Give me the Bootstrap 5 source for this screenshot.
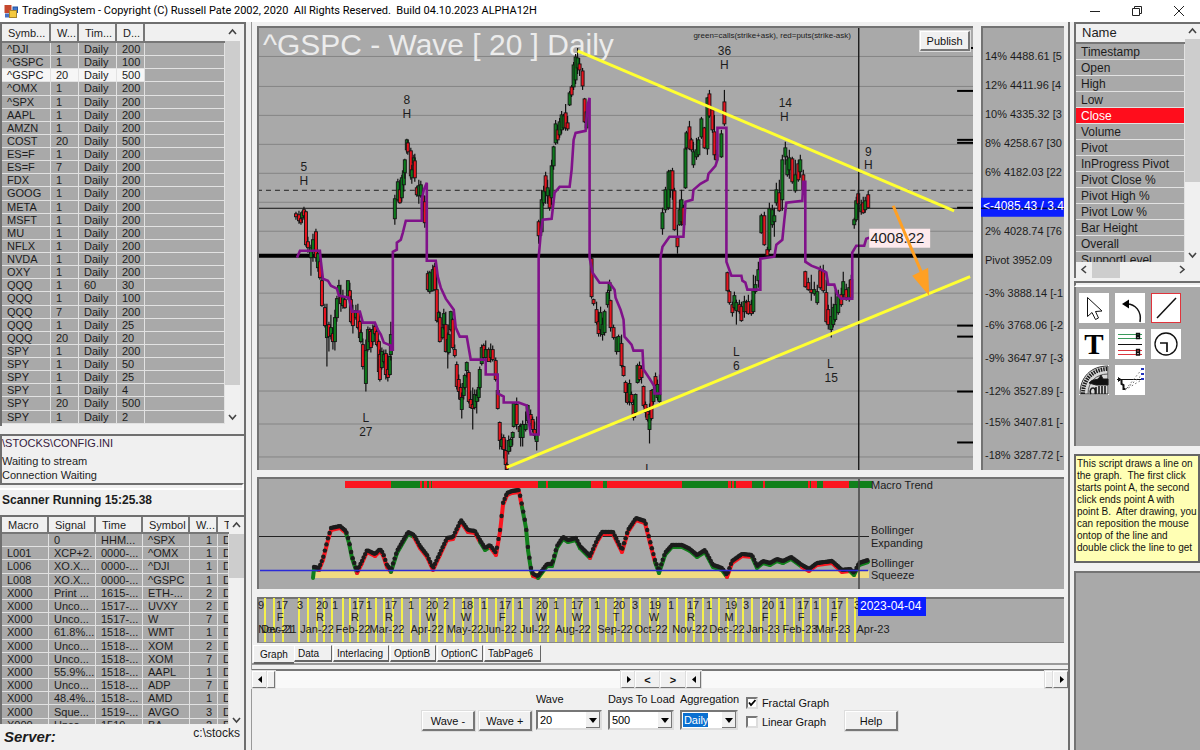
<!DOCTYPE html>
<html lang="en">
<head>
<meta charset="utf-8">
<meta name="viewport" content="width=device-width, initial-scale=1">
<title>TradingSystem</title>
<link href="https://cdn.jsdelivr.net/npm/bootstrap@5.3.0/dist/css/bootstrap.min.css" rel="stylesheet">
<style>
:root{--face:#f0f0f0;--pane:#a9a9a9;--edge:#6f6f6f}
body{font-family:"Liberation Sans",sans-serif;font-size:11px;line-height:14px;color:#1c1c1c;background:var(--face);min-height:100vh}
.titlebar{height:22px;background:#fff;font-family:Roboto,sans-serif;font-size:11px;color:#000}
.titlebar button{width:42px;height:22px;background:none;border:0;padding:0}
.left-side{width:246px;border-right:2px solid var(--edge)}
.right-side{width:132px;border-left:2px solid var(--edge)}
.sunken{border:2px solid var(--edge);border-right-color:#fff;border-bottom-color:#fff}
.pane{background:var(--pane);border-top:2px solid #747474;border-left:2px solid #747474}
.grid-list{width:100%;table-layout:fixed;border-collapse:separate;border-spacing:0;font-size:11px;line-height:12px;background:var(--pane)}
.grid-list th{height:17px;background:var(--face);font-weight:400;border-right:2px solid #777;border-bottom:2px solid #777;padding:0 0 0 6px;white-space:nowrap;overflow:hidden}
.grid-list th:last-child{border-right:0}
.grid-list td{border-right:1px solid #e2e2e2;border-bottom:1px solid #e2e2e2;padding:0 0 0 5px;white-space:nowrap;overflow:hidden}
.grid-list td:first-child{padding-left:5px}
.grid-list tr.picked td:not(:last-child){background:#f6f6f6}
.watch-box{height:404px}
.watch-box th{height:19px}
.watch-box table{height:400px}
.scan-box{height:209px}
.scan-box table{height:215px}
.scan-box td:nth-child(5){text-align:right;padding-right:5px}
.name-box{height:256px}
.name-box .grid-list{font-size:12px;line-height:14px}
.name-box .grid-list th{height:20px;font-size:13px}
.name-box .grid-list td{height:16px}
.name-box tr.picked td{background:#ff0d1c!important;color:#fff}
.vbar{width:15px;background:var(--face)}
.vbar svg,.hbar svg{display:block}
.thumb{background:#cdcdcd}
.hbar{height:16px}
.tool{width:30px;height:30px;border:0;padding:0;background:#fff}
.tool.chosen{outline:1px solid #e0343c;outline-offset:-1px}
.tool svg{display:block}
.tools{display:grid;grid-template-columns:repeat(3,30px);gap:6px;padding:6px 3px;height:159px;align-content:start}
.hint{height:109px;background:#ffffb4;border:2px solid #666;font-size:10px;line-height:12px;padding:2px 0 0 1px;color:#111;overflow:hidden}
.main-side{background:var(--face);border-left:1px solid #999;margin-left:5px;min-width:0}
.charts{padding:4px 4px 0 5px}
.price-row{display:grid;grid-template-columns:717fr 8fr 83fr;margin-bottom:7px}
.charts svg{display:block;width:100%;height:auto;background:var(--pane)}
.publish{top:5px;right:3px;width:50px;height:20px}
.raised{font-size:11px;line-height:14px;background:var(--face);border:1px solid #fff;border-right:2px solid #777;border-bottom:2px solid #777;padding:0;color:#111;box-shadow:0 0 0 1px #ddd}
.tabs{padding:2px 0 0 1px;height:22px;border-bottom:2px solid #9a9a9a}
.tabs button{height:17px;border:1px solid #fff;border-right:1px solid #666;border-bottom:2px solid #666;background:var(--face);font-size:10px;line-height:13px;padding:0 0 0 3px;text-align:left;margin-right:1px;color:#111;white-space:nowrap}
.tabs button.on{height:19px;padding-left:6px;border-right:0;margin-right:0}
.strip{height:19px;border-top:2px solid #777;background:#f9f9f9}
.strip .raised{height:17px;border-width:1px}
.controls{color:#111;white-space:nowrap}
.controls .raised{width:53px;height:20px;margin-top:19px}
.combo{width:66px;margin-right:6px}
.combo.agg{width:58px;margin-right:8px}
.combo label{margin-bottom:4px}
.combo select{appearance:none;height:20px;border:2px solid #777;border-right-color:#ddd;border-bottom-color:#ddd;background:#fff;font:inherit;padding:0 0 0 2px;width:100%;border-radius:0;display:block}
.combo.agg select{color:#fff;background:linear-gradient(#0a6fd0,#0a6fd0) 1px 1px/25px 14px no-repeat #fff}
.combo::after{content:"";position:absolute;right:2px;bottom:2px;width:14px;height:16px;background:var(--face);border-right:1px solid #777;border-bottom:1px solid #777}
.combo::before{content:"";position:absolute;z-index:1;right:5px;bottom:7px;border:4px solid transparent;border-top:5px solid #000;border-bottom:0}
.check{padding-top:4px}
.check label{margin-bottom:5px}
.check input{appearance:none;width:12px;height:12px;margin:0;background:#fff;border:2px solid #777;border-right-color:#ddd;border-bottom-color:#ddd;display:block}
.check input:checked{background:url("data:image/svg+xml,%3Csvg xmlns='http://www.w3.org/2000/svg' viewBox='0 0 8 8'%3E%3Cpath d='M1 3.500l2 2.500L7.500 1' fill='none' stroke='black' stroke-width='1.800'/%3E%3C/svg%3E") #fff}
.scan-title{font-size:12px;padding:3px 0 8px 2px}
.server{font-size:15px;line-height:18px;font-weight:700;font-style:italic}
</style>
</head>
<body class="d-flex flex-column">
<header class="titlebar d-flex align-items-center">
  <svg width="14" height="14" viewBox="0 0 14 14" class="ms-1 me-1" aria-hidden="true"><rect x=".5" y="1" width="7" height="8" fill="#c6482e"/><rect x="9" y="3" width="4.500" height="5.500" fill="#3f78cf" stroke="#2553a0"/><rect x="1" y="9.500" width="5" height="4" fill="#4770c2"/><rect x="5.500" y="6.500" width="7" height="7" fill="#f5c93e" stroke="#a8862a"/></svg>
  <span class="flex-grow-1 text-nowrap">TradingSystem - Copyright (C) Russell Pate 2002, 2020&nbsp; All Rights Reserved.&nbsp; Build 04.10.2023 ALPHA12H</span>
  <button aria-label="Minimize"><svg width="12" height="12"><path d="M1 6.500h10" stroke="#222"/></svg></button>
  <button aria-label="Restore"><svg width="12" height="12" fill="none" stroke="#222"><path d="M1.500 3.500h7v7h-7zM3.500 3.500v-2h7v7h-2"/></svg></button>
  <button aria-label="Close"><svg width="12" height="12"><path d="M1 1l10 10M11 1L1 11" stroke="#222"/></svg></button>
</header>
<main class="d-flex flex-grow-1">
  <aside class="left-side flex-shrink-0 d-flex flex-column">
    <div class="sunken border-bottom-0 border-end-0 d-flex watch-box overflow-hidden">
      <div class="flex-grow-1"><table class="grid-list" id="watch"><colgroup><col style="width:49px"><col style="width:28px"><col style="width:38px"><col style="width:28px"><col></colgroup><thead><tr><th>Symb...</th><th>W...</th><th>Tim...</th><th>D...</th><th></th></tr></thead><tbody></tbody></table></div>
      <div class="vbar d-flex flex-column me-1">
        <svg width="15" height="17"><path d="M4 10l3.500-4L11 10" fill="none" stroke="#444" stroke-width="1.600"/></svg>
        <div class="thumb flex-grow-1"></div><div style="height:24px"></div>
        <svg width="15" height="17"><path d="M4 6l3.500 4L11 6" fill="none" stroke="#444" stroke-width="1.600"/></svg>
      </div>
    </div>
    <div class="sunken border-end-0 border-bottom-0 mt-2 px-0" style="height:49px">
      <div style="color:#35203c">\STOCKS\CONFIG.INI</div>
      <div class="pt-1">Waiting to stream</div><div>Connection Waiting</div>
    </div>
    <div class="sunken border-start-0" style="height:7px"></div>
    <div class="fw-bold scan-title text-nowrap">Scanner Running 15:25.38</div>
    <div class="sunken border-bottom-0 border-end-0 d-flex scan-box overflow-hidden">
      <div class="flex-grow-1"><table class="grid-list" id="scan"><colgroup><col style="width:47px"><col style="width:47px"><col style="width:47px"><col style="width:47px"><col style="width:28px"><col></colgroup><thead><tr><th>Macro</th><th>Signal</th><th>Time</th><th>Symbol</th><th>W...</th><th>T</th></tr></thead><tbody></tbody></table></div>
      <div class="vbar d-flex flex-column">
        <svg width="15" height="17"><path d="M4 10l3.500-4L11 10" fill="none" stroke="#444" stroke-width="1.600"/></svg>
        <div class="thumb" style="height:44px"></div><div class="flex-grow-1"></div>
        <svg width="15" height="10"><path d="M4 4l3.500 4L11 4" fill="none" stroke="#444" stroke-width="1.600"/></svg>
      </div>
    </div>
    <div class="d-flex justify-content-between align-items-start px-1"><span class="server pt-1">Server:</span><span style="font-size:12px;padding-top:2px">c:\stocks</span></div>
  </aside>

  <section class="main-side flex-grow-1 d-flex flex-column">
    <div class="charts">
      <div class="price-row">
        <div class="position-relative">
          <svg id="price" viewBox="257 26 717 445" font-size="12" fill="#1c1c1c"></svg>
          <button class="raised publish position-absolute">Publish</button>
        </div>
        <span></span>
        <svg id="axis" viewBox="981 26 83 445" font-size="11" fill="#1c1c1c"></svg>
      </div>
      <svg id="macro" class="mb-2" viewBox="257 478 807 112" font-size="11" fill="#1c1c1c"></svg>
      <svg id="dates" viewBox="257 598 807 46" font-size="11" fill="#1c1c1c"></svg>
    </div>
    <nav class="tabs d-flex align-items-start">
      <button class="on" style="width:41px">Graph</button><button style="width:38px">Data</button><button style="width:56px">Interlacing</button><button style="width:46px">OptionB</button><button style="width:46px">OptionC</button><button style="width:57px">TabPage6</button>
    </nav>
    <div class="mt-1"></div>
    <div class="strip d-flex">
      <div class="d-flex" style="flex:383 1 0"><button class="raised" style="width:15px" aria-label="Scroll left"><svg width="10" height="9" class="d-block mx-auto"><path d="M7 1v7L3 4.500z"/></svg></button><span class="raised" style="width:8px"></span><span class="flex-grow-1"></span><button class="raised" style="width:14px" aria-label="Scroll right"><svg width="10" height="9" class="d-block mx-auto"><path d="M4 1v7l4-3.500z"/></svg></button></div>
      <button class="raised fw-bold" style="width:25px">&lt;</button><button class="raised fw-bold" style="width:26px">&gt;</button>
      <div class="d-flex" style="flex:382 1 0"><button class="raised" style="width:15px" aria-label="Scroll left"><svg width="10" height="9" class="d-block mx-auto"><path d="M7 1v7L3 4.500z"/></svg></button><span class="flex-grow-1"></span><span class="raised" style="width:8px"></span><button class="raised" style="width:15px" aria-label="Scroll right"><svg width="10" height="9" class="d-block mx-auto"><path d="M4 1v7l4-3.500z"/></svg></button></div>
    </div>
    <form class="controls d-flex justify-content-center align-items-start pt-1">
      <button type="button" class="raised me-1">Wave -</button>
      <button type="button" class="raised me-1">Wave +</button>
      <div class="combo position-relative"><label for="wave" class="d-block">Wave</label><select id="wave"><option>20</option></select></div>
      <div class="combo position-relative"><label for="days" class="d-block">Days To Load</label><select id="days"><option>500</option></select></div>
      <div class="combo agg position-relative"><label for="agg" class="d-block">Aggregation</label><select id="agg"><option>Daily</option></select></div>
      <div class="check"><label class="d-flex align-items-center gap-1"><input type="checkbox" checked>Fractal Graph</label><label class="d-flex align-items-center gap-1"><input type="checkbox">Linear Graph</label></div>
      <button type="button" class="raised ms-3">Help</button>
    </form>
  </section>

  <aside class="right-side flex-shrink-0 d-flex flex-column ps-1">
    <div class="sunken border-end-0 border-bottom-0 name-box d-flex flex-column overflow-hidden">
      <div class="d-flex flex-grow-1 overflow-hidden" style="height:240px">
        <div class="flex-grow-1"><table class="grid-list" id="names"><thead><tr><th>Name</th></tr></thead><tbody></tbody></table></div>
        <div class="vbar d-flex flex-column"><svg width="15" height="15"><path d="M4 9l3.500-4L11 9" fill="none" stroke="#444" stroke-width="1.600"/></svg><div class="thumb" style="height:143px"></div><div class="flex-grow-1"></div><svg width="15" height="15"><path d="M4 6l3.500 4L11 6" fill="none" stroke="#444" stroke-width="1.600"/></svg></div>
      </div>
      <div class="hbar d-flex flex-shrink-0"><svg width="16" height="15"><path d="M10 4L6 7.500l4 3.500" fill="none" stroke="#444" stroke-width="1.600"/></svg><div class="thumb" style="width:28px"></div><div class="flex-grow-1"></div><svg width="32" height="15"><path d="M12 4l4 3.500-4 3.500" fill="none" stroke="#444" stroke-width="1.600"/></svg></div>
    </div>
    <div class="sunken border-end-0" style="height:6px;margin-top:3px"></div>
    <div class="pane tools border-top-0">
      <button class="tool" aria-label="Pointer"><svg width="30" height="30" fill="#fff" stroke="#111"><path d="M8.500 4.500v19l4.500-4 3.500 7 3-1.500-3-6.500 6.500-.5z"/></svg></button>
      <button class="tool" aria-label="Undo"><svg width="30" height="30"><path d="M12 11c8 0 15 7 13 18" fill="none" stroke="#111" stroke-width="1.500"/><path d="M7 11l7-4.500v9z"/></svg></button>
      <button class="tool chosen" aria-label="Line"><svg width="30" height="30"><path d="M6 25L25 5" stroke="#111" stroke-width="1.500"/></svg></button>
      <button class="tool" aria-label="Text"><svg width="30" height="30"><text x="15" y="25" text-anchor="middle" font-family="Liberation Serif,serif" font-size="29" font-weight="700">T</text></svg></button>
      <button class="tool" aria-label="Levels"><svg width="30" height="30" fill="none"><path d="M3 5.500h24M3 9.500h24" stroke="#3a9a5c"/><path d="M3 15.500h24" stroke="#111"/><path d="M3 21.500h24M3 25.500h24" stroke="#d9363e"/><path d="M21.500 4.500h3v2h-3zM21.500 7.500h3v2h-3zM21.500 20.500h3v2.500h-3zM21.500 23.500h3v2.500h-3z" stroke="#111" stroke-width="1.300"/></svg></button>
      <button class="tool" aria-label="Clock"><svg width="30" height="30" fill="none" stroke="#111"><circle cx="15" cy="15" r="11" stroke-width="1.300"/><path d="M9 14h7v9" stroke-width="1.700"/></svg></button>
      <button class="tool" aria-label="Fibonacci arc"><svg width="30" height="30" fill="none" stroke="#1b1b1b"><rect width="30" height="30" fill="#fff" stroke="none"/><path d="M1 29C1 12 12 1 29 1v28z" fill="#d8d8d8" stroke="#333"/><path d="M4 29C4 14 14 4 29 4" stroke-width="4" stroke-dasharray="1.500 1"/><path d="M9 29C9 17 17 9 29 9" stroke="#555"/><path d="M10 18c4-5 8-2 10-5l2-3 2 4h5v6H17z" fill="#111"/><path d="M17 22v7M20 21v8M23 21v8M26 21v8M12 29c-2-3 0-6 2-6s3 3 2 6" stroke-width="1.600"/></svg></button>
      <button class="tool" aria-label="Projection"><svg width="30" height="30" fill="none"><path d="M2 14.500h25" stroke="#111"/><path d="M3 12.500l3 2-3 2" fill="#111" stroke="#111"/><path d="M6.500 15v4l2 1v4h2" stroke="#111" stroke-width="2"/><path d="M11 24L27 4M12 23l15-13M10 25l18-11" stroke="#666" stroke-dasharray="1.500 2.500"/><path d="M26 4h3M26 9h3M26 14h3" stroke="#23b" stroke-width="2"/></svg></button>
    </div>
    <div class="hint mt-2">This script draws a line on the graph.&nbsp; The first click starts point A, the second click ends point A with point B.&nbsp; After drawing, you can reposition the mouse ontop of the line and double click the line to get</div>
    <div class="pane flex-grow-1 mt-2"></div>
  </aside>
</main>
<script src="https://cdn.jsdelivr.net/npm/bootstrap@5.3.0/dist/js/bootstrap.bundle.min.js"></script>
<script>
const $ = id => document.getElementById(id);
const rows = (id, data, picked) => $(id).tBodies[0].innerHTML = data.map((r, i) =>
  `<tr${i === picked ? ' class="picked"' : ''}>` + r.map(c => `<td>${c}</td>`).join('') + '</tr>').join('');

rows('watch', `^DJI 1 Daily 200|^GSPC 1 Daily 100|^GSPC 20 Daily 500|^OMX 1 Daily 200|^SPX 1 Daily 200|AAPL 1 Daily 200|AMZN 1 Daily 200|COST 20 Daily 500|ES=F 1 Daily 200|ES=F 7 Daily 200|FDX 1 Daily 200|GOOG 1 Daily 200|META 1 Daily 200|MSFT 1 Daily 200|MU 1 Daily 200|NFLX 1 Daily 200|NVDA 1 Daily 200|OXY 1 Daily 200|QQQ 1 60 30|QQQ 1 Daily 100|QQQ 7 Daily 200|QQQ 1 Daily 25|QQQ 20 Daily 20|SPY 1 Daily 200|SPY 1 Daily 50|SPY 1 Daily 25|SPY 1 Daily 4|SPY 20 Daily 500|SPY 1 Daily 2`
  .split('|').map(r => [...r.split(' '), '']), 2);
rows('scan', `,0,HHM...,^SPX,1|L001,XCP+2.,0000-...,^OMX,1|L006,XO.X...,0000-...,^DJI,1|L008,XO.X...,0000-...,^GSPC,1|X000,Print ...,1615-...,ETH-...,2|X000,Unco...,1517-...,UVXY,2|X000,Unco...,1517-...,W,7|X000,61.8%...,1518-...,WMT,1|X000,Unco...,1518-...,XOM,2|X000,Unco...,1518-...,XOM,7|X000,55.9%...,1518-...,AAPL,1|X000,Unco...,1518-...,ADP,7|X000,48.4%...,1518-...,AMD,1|X000,Sque...,1519-...,AVGO,3|X000,Unco...,1519-...,BA,2`
  .split('|').map(r => [...r.split(','), 'D']));
rows('names', 'Timestamp|Open|High|Low|Close|Volume|Pivot|InProgress Pivot|Pivot Close %|Pivot High %|Pivot Low %|Bar Height|Overall|SupportLevel'
  .split('|').map(n => [n]), 4);

const line = (x1, y1, x2, y2, c, w = 1, extra = '') => `<path d="M${x1} ${y1}L${x2} ${y2}" stroke="${c}" stroke-width="${w}" fill="none" ${extra}/>`;
const rect = (x, y, w, h, c) => `<rect x="${x}" y="${y}" width="${w}" height="${h}" fill="${c}"/>`;
const text = (x, y, s, extra = '') => `<text x="${x}" y="${y}" ${extra}>${s.replace('<', '&lt;')}</text>`;
const mid = 'text-anchor="middle"';
const frame = (x, y, w, h) => line(x, y + 1, x + w, y + 1, '#727272', 2) + line(x + 1, y, x + 1, y + h, '#727272', 2);

// Candles: x, wick top, body top, body bottom, wick bottom, direction
const candles = `296 212 214 217 220 r|299 211 215 221 224 r|301 216 219 223 225 r|302 211 213 218 222 g|304 207 210 216 220 r|306 211 212 245 247 r|308 237 242 248 253 r|311 245 248 258 276 g|313 234 240 252 262 g|316 229 232 258 262 r|318 250 254 268 272 g|320 256 262 278 280 r|322 276 281 306 307 r|325 304 308 326 328 r|327 304 326 338 367 g|329 322 325 337 352 r|331 315 328 336 340 g|333 328 334 342 350 r|335 310 318 342 351 g|337 296 299 318 322 g|339 280 286 294 299 g|341 285 297 304 312 r|343 290 298 306 309 g|345 298 300 308 309 r|348 281 281 297 300 g|350 283 291 300 308 r|351 296 300 322 324 r|353 305 312 326 334 r|356 305 311 318 320 g|358 304 312 328 330 r|360 320 322 338 340 r|361 330 333 342 344 g|363 339 345 367 370 r|366 340 351 384 392 g|368 327 330 350 352 g|370 328 330 342 346 r|371 330 332 348 353 r|373 325 330 342 346 g|375 324 327 334 336 r|377 328 332 345 347 r|379 340 342 372 375 r|380 350 355 380 382 r|382 348 352 368 370 g|384 350 355 362 364 g|386 350 354 375 380 r|388 355 370 378 382 r|390 356 357 375 376 g|391 322 335 355 361 g
395 195 199 219 225 g|398 179 182 200 202 g|400 180 190 203 204 r|402 175 178 198 202 g|404 168 171 185 192 g|405 159 160 173 179 g|407 139 140 150 154 g|408 140 143 152 155 r|411 148 151 176 180 r|412 165 170 178 184 g|414 155 158 163 166 g|415 154 161 178 182 r|417 186 188 195 197 r|419 180 186 196 204 g|421 181 185 196 198 g|423 190 196 210 212 r|425 196 202 223 228 r
428 271 274 290 292 r|430 271 273 292 294 g|433 265 270 291 292 g|435 263 267 290 290 r|437 268 290 321 323 r|439 311 313 322 325 g|440 312 318 342 343 r|443 325 328 338 340 g|444 309 314 325 330 g|446 312 325 352 353 r|448 333 340 352 369 g|449 325 335 353 355 g|451 311 312 330 332 g|453 318 320 348 350 r|455 345 350 356 358 r|457 362 365 387 390 r|459 375 380 392 400 r|461 384 388 400 401 r|462 393 398 410 419 g|464 378 384 396 400 g|465 374 376 388 390 g|467 362 363 371 378 g|469 371 373 402 404 r|471 391 400 408 409 r|473 388 405 409 430 r|475 390 395 408 410 g|477 390 396 402 414 g|479 385 388 398 402 g|480 367 370 388 390 g|482 345 348 364 366 g|484 344 346 358 360 r|486 341 350 358 361 g|489 348 350 362 362 r|491 344 350 358 363 g|493 346 350 360 362 r|496 358 361 380 382 r|498 388 391 409 410 r|500 422 423 441 450 r|502 434 440 447 450 g|504 435 438 450 459 r|506 440 451 465 470 r|507 463 465 470 471 r|509 436 441 452 455 g|511 438 440 447 452 g|513 432 433 438 446 g|514 403 404 427 428 g|517 398 405 425 430 r|520 425 427 432 430 r|521 424 427 438 447 g|523 421 425 438 447 g|526 412 425 430 432 g|528 405 406 421 424 g|531 410 415 424 427 r|533 417 420 430 433 r|535 422 430 436 440 r|537 417 435 442 451 g
539 220 222 236 244 r|542 190 200 232 236 g|544 186 191 203 206 g|546 172 176 192 204 r|548 180 188 196 204 g|550 190 196 208 211 r|552 160 166 198 205 g|554 146 147 166 170 g|556 120 124 143 145 g|558 125 130 140 144 r|560 118 122 135 138 g|562 111 115 130 134 g|564 114 116 128 130 g|566 104 113 128 131 r|568 116 123 129 131 r|570 91 93 105 106 g|572 85 87 95 97 r|574 62 65 87 90 g|576 54 57 80 84 g|578 48 58 68 74 g|580 58 64 70 76 r|583 68 71 86 90 r|585 98 99 122 123 r|587 110 112 128 130 g
592 257 259 297 299 r|594 299 300 304 306 r|597 302 310 323 325 r|599 312 322 334 337 r|601 307 313 330 337 g|603 318 325 335 341 g|605 310 312 333 336 g|608 290 293 305 308 g|610 280 283 291 300 g|611 300 301 328 332 r|614 325 328 338 340 r|617 337 338 352 355 g|619 335 337 352 352 g|622 335 344 366 368 r|624 366 367 376 377 r|626 381 383 393 403 r|628 384 393 403 405 r|630 380 384 402 406 g|632 392 395 403 405 r|634 400 405 418 421 r|636 394 395 413 418 g|638 364 366 383 384 g|640 362 366 380 382 r|642 366 369 378 384 r|644 386 387 406 408 r|646 402 405 413 418 r|648 408 412 420 422 r|650 404 415 430 444 g|652 390 391 419 421 r|654 385 390 402 405 g|656 373 377 386 390 r|658 380 385 398 401 g|660 375 395 402 403 g
663 208 213 229 235 g|666 187 190 210 213 g|669 170 172 208 210 g|671 170 171 190 198 g|673 168 171 190 200 r|675 188 191 230 231 r|678 225 238 247 254 r|680 200 210 225 226 g|682 190 200 222 226 g|684 205 208 225 235 r|686 147 149 188 189 g|687 131 133 148 150 g|690 121 127 149 150 r|692 138 140 150 152 r|694 142 152 165 168 g|697 138 150 157 160 g|699 137 140 155 157 g|702 117 119 137 139 g|705 127 128 148 149 r|708 97 98 149 155 g|710 90 94 116 118 r|713 108 110 130 133 r|715 115 132 155 160 r|717 150 155 160 165 r|722 130 134 157 158 g|725 90 102 124 126 r
728 272 273 291 292 r|730 290 292 303 305 r|733 302 305 313 317 r|735 292 296 308 310 g|737 300 303 311 325 g|740 300 305 312 314 r|742 302 307 321 322 r|745 296 302 312 318 g|747 300 303 312 314 r|749 295 302 314 315 r|752 300 305 314 316 r|754 275 290 312 314 g|756 276 285 292 294 g|759 262 270 281 288 g
762 214 216 233 234 g|765 212 216 245 246 r|768 247 250 256 258 r|770 203 209 250 252 g|773 205 210 225 228 g|775 208 216 222 237 g|777 183 190 203 206 g|780 180 193 211 212 r|783 155 160 200 211 g|786 142 148 157 165 g|788 156 160 175 177 g|790 150 158 170 179 g|793 157 159 182 184 r|796 160 175 191 193 g|799 160 164 180 182 r|801 155 160 172 178 g|804 170 175 190 195 r
806 271 272 287 288 r|809 278 283 290 291 r|812 275 290 293 301 r|815 282 290 294 296 g|818 285 292 303 305 g|821 266 271 288 290 r|824 265 271 291 293 r|827 280 293 322 324 r|829 305 310 325 330 r|832 297 317 330 338 g|834 304 308 325 328 g|836 290 305 320 322 g|839 290 297 313 315 g|842 288 295 305 307 r|844 272 282 295 300 g|847 284 290 298 301 r|850 280 288 300 302 g|852 275 280 298 300 r
855 218 220 225 229 g|857 197 201 220 222 g|859 190 194 204 218 r|862 200 205 212 215 g|864 197 203 213 214 r|866 197 201 210 213 g|869 191 195 208 209 r`
  .split(/[|\n]/).map(s => s.split(' ')).map(([x, a, b, c, d, k]) =>
    line(x, a, x, d, '#111', 1.2) + `<rect x="${x - 1.5}" y="${b}" width="3" height="${c - b}" fill="${k === 'r' ? '#e8141f' : '#0d7a1c'}" stroke="#151515" stroke-width=".9"/>`).join('');

const average = 'M297 258L300 251H320L321 262L323 279L328 281L331 286L337 289L339 296L349 298L352 312H360L363 323H375L378 330L381 335L384 343L391 346V350H393V252L397 250V243L401 240L403 233L406 221H422V200L424 190L427 183V261H436L438 277L441 288L446 299L454 310L456 328L460 337H467L471 360H486V375H498V394L504 397V403H519L527 406L529 420L531 435H539V258L541 235L543 220L552 219L555 193L560 187H570L572 170L574 140L576 133L586 131L588 105L590 98V258L593 273L600 283H610L615 290L616 298L621 310L624 320L625 337L632 345L634 351H643L644 370L650 379L655 387V394H661V258L663 247L670 237H684L686 202L693 200L694 190L701 184L708 180L709 174L716 166L718 160V128H727V262L732 276H742L743 281L746 283L748 290H761V259L775 257L777 245L783 240L785 220L787 203L803 201L804 182H806V262L812 266L820 269L827 273L829 285H835L838 295L842 299H853V253L857 246H865L867 239L870 238';

let p = [56, 86, 115, 144, 173, 202, 231, 293, 325, 358, 391, 424, 457].map(y => line(257, y + .5, 974, y + .5, '#858585')).join('');
p += text(263, 55, '^GSPC - Wave [ 20 ] Daily', 'font-size="30" fill="#ececec"');
p += text(694, 38, 'green=calls(strike+ask), red=puts(strike-ask)', 'font-size="8"');
p += line(257, 190.5, 974, 190.5, '#222', 1, 'stroke-dasharray="5 4"') + line(257, 208.5, 974, 208.5, '#111') + line(257, 256, 974, 256, '#000', 4);
p += candles + `<path d="${average}" fill="none" stroke="#80128a" stroke-width="2.600"/>`;
p += [91, 140, 143, 208, 326, 337, 392, 443].map(y => line(958, y, 974, y, '#000', 2)).join('') + line(971, 48, 974, 48, '#000', 2);
p += line(859.5, 26, 859.5, 471, '#111', 1.3);
p += line(578, 51, 955, 211, '#ffff32', 3) + line(507, 468, 971, 277, '#ffff32', 3);
p += rect(870, 229, 61, 19, '#fde9ec') + text(871, 243, '4008.22', 'font-size="15"');
p += line(894, 206, 922, 272, '#ffa024', 3) + '<path d="M913 276L929 268L930 296z" fill="#ffa024"/>';
p += [[304, 171, '5'], [304, 185, 'H'], [407, 104, '8'], [407, 118, 'H'], [725, 55, '36'], [725, 69, 'H'], [786, 107, '14'], [785, 121, 'H'], [869, 156, '9'], [869, 169, 'H'], [366, 423, 'L'], [366, 437, '27'], [737, 356, 'L'], [737, 370, '6'], [831, 368, 'L'], [832, 382, '15'], [649, 474, 'L']].map(([x, y, s]) => text(x, y, s, mid)).join('');
$('price').innerHTML = p + frame(257, 26, 717, 445);

$('axis').innerHTML = [[60, '14% 4488.61 [5'], [89, '12% 4411.96 [4'], [118, '10% 4335.32 [3'], [147, '8% 4258.67 [30'], [176, '6% 4182.03 [22'], [235, '2% 4028.74 [76'], [264, 'Pivot 3952.09'], [297, '-3% 3888.14 [-1'], [329, '-6% 3768.06 [-2'], [362, '-9% 3647.97 [-3'], [395, '-12% 3527.89 [-'], [427, '-15% 3407.81 [-'], [460, '-18% 3287.72 [-']].map(([y, s]) => text(985, y, s)).join('')
  + frame(981, 26, 83, 445) + rect(981, 198, 83, 19, '#0a1eff') + line(981, 208.5, 1064, 208.5, '#001') + text(983, 210, '<-4085.43 / 3.4', 'fill="#fff" font-size="12"');

// Oscillator and trend strip
const R = '#fb1620', G = '#11801b';
let m = [[345, 391, R], [391, 420, G], [420, 422, R], [422, 424, G], [424, 427, R], [427, 429, G], [429, 431, R], [431, 432, G], [432, 538, R], [538, 546, G], [546, 548, R], [548, 591, G], [591, 603, R], [603, 607, G], [607, 682, R], [682, 728, G], [728, 731, R], [731, 732, G], [732, 734, R], [734, 736, G], [736, 752, R], [752, 763, G], [763, 765, R], [765, 808, G], [808, 810, R], [810, 811, G], [811, 817, R], [817, 823, G], [823, 849, R], [849, 872, G]].map(([a, b, c]) => rect(a, 482, b - a, 7, c)).join('');
m += line(257, 537.5, 869, 537.5, '#222') + rect(312, 572, 557, 7, '#f0da80');
const osc = [[313, 578], [314, 569], [319, 570], [323, 560], [328, 540], [331, 530], [340, 528], [346, 533], [349, 543], [352, 558], [357, 573], [362, 563], [367, 552], [375, 556], [380, 551], [383, 555], [387, 567], [391, 572], [397, 553], [408, 534], [414, 537], [420, 548], [427, 557], [433, 570], [440, 555], [447, 540], [453, 539], [461, 522], [468, 532], [475, 533], [480, 542], [485, 550], [490, 547], [496, 555], [500, 532], [503, 505], [507, 495], [512, 493], [519, 492], [522, 507], [526, 528], [528, 550], [531, 570], [533, 576], [538, 578], [547, 566], [552, 566], [557, 548], [563, 539], [568, 542], [576, 540], [580, 548], [590, 558], [597, 542], [602, 534], [613, 534], [622, 552], [628, 532], [636, 520], [645, 523], [650, 543], [655, 562], [659, 573], [665, 555], [672, 547], [682, 547], [690, 551], [697, 557], [705, 552], [713, 567], [722, 570], [727, 577], [732, 563], [742, 556], [752, 557], [757, 568], [763, 563], [770, 565], [777, 561], [783, 563], [791, 559], [802, 567], [809, 571], [817, 565], [832, 563], [842, 572], [850, 571], [854, 575], [859, 565], [868, 562]];
const green = [[312, 319], [346, 357], [391, 414], [480, 490], [522, 533], [538, 590], [655, 727], [752, 802], [850, 869]];
let under = '', dots = '';
osc.slice(1).forEach(([x, y], i) => {
  const [a, b] = osc[i], c = green.some(([s, e]) => a >= s && x <= e) ? G : R;
  under += line(a, b + 1, x, y + 1, c, 4, 'stroke-linecap="round"');
});
let k = 1;
for (let x = 314; x <= 868; x += 1.55) {
  while (osc[k][0] < x) k++;
  const [a, b] = osc[k - 1], [c, d] = osc[k];
  dots += `<circle cx="${x}" cy="${(b + (d - b) * (x - a) / (c - a) - 1).toFixed(1)}" r="2.200"/>`;
}
m += under + dots + line(260, 571.5, 868, 571.5, '#2a2ad8', 1.5) + line(859, 478, 859, 590, '#444', 1.5);
m += text(871, 490, 'Macro Trend') + text(871, 535, 'Bollinger') + text(871, 548, 'Expanding') + text(871, 568, 'Bollinger') + text(871, 580, 'Squeeze');
$('macro').innerHTML = m + frame(257, 478, 807, 112);

// Date ruler
let d = [265, 274, 283, 299, 308, 317, 324, 332, 343, 350, 358, 367, 376, 384, 393, 402, 411, 420, 429, 437, 445, 454, 463, 473, 480, 487, 496, 505, 513, 522, 531, 540, 548, 556, 565, 573, 582, 590, 598, 606, 615, 623, 631, 640, 650, 658, 668, 677, 686, 694, 703, 711, 719, 728, 736, 743, 752, 761, 769, 777, 785, 794, 803, 811, 820, 828, 837, 847, 855].map(x => line(x, 599, x, 643, '#f4f04a', 2)).join('');
const put = (y, s) => s.split('|').map(e => e.split(' ')).map(([x, t]) => text(x, y, t, mid)).join('');
d += put(610, '261 9|282 17|300 3|322 20|335 1|358 17|369 1|391 17|411 1|432 20|446 2|467 18|484 1|505 17|520 1|542 20|556 1|577 17|597 1|619 20|635 3|655 19|671 1|693 17|709 1|731 19|746 3|768 20|782 1|803 17|816 1|837 17|857 3');
d += put(622, '280 F|320 R|355 R|389 R|431 W|466 W|502 F|541 W|577 W|616 T|654 W|691 R|729 M|765 F|801 F|834 F');
d += put(634, '276 Nov-21|279 Dec-21|317 Jan-22|353 Feb-22|387 Mar-22|427 Apr-22|465 May-22|500 Jun-22|535 Jul-22|573 Aug-22|615 Sep-22|651 Oct-22|690 Nov-22|727 Dec-22|763 Jan-23|800 Feb-23|833 Mar-23|873 Apr-23');
d += rect(858, 598, 68, 19, '#0a1eff') + text(860, 611, '2023-04-04', 'fill="#fff" font-size="12"');
$('dates').innerHTML = frame(257, 598, 807, 46) + line(257, 643.5, 1064, 643.5, '#888') + d;
</script>
</body>
</html>
